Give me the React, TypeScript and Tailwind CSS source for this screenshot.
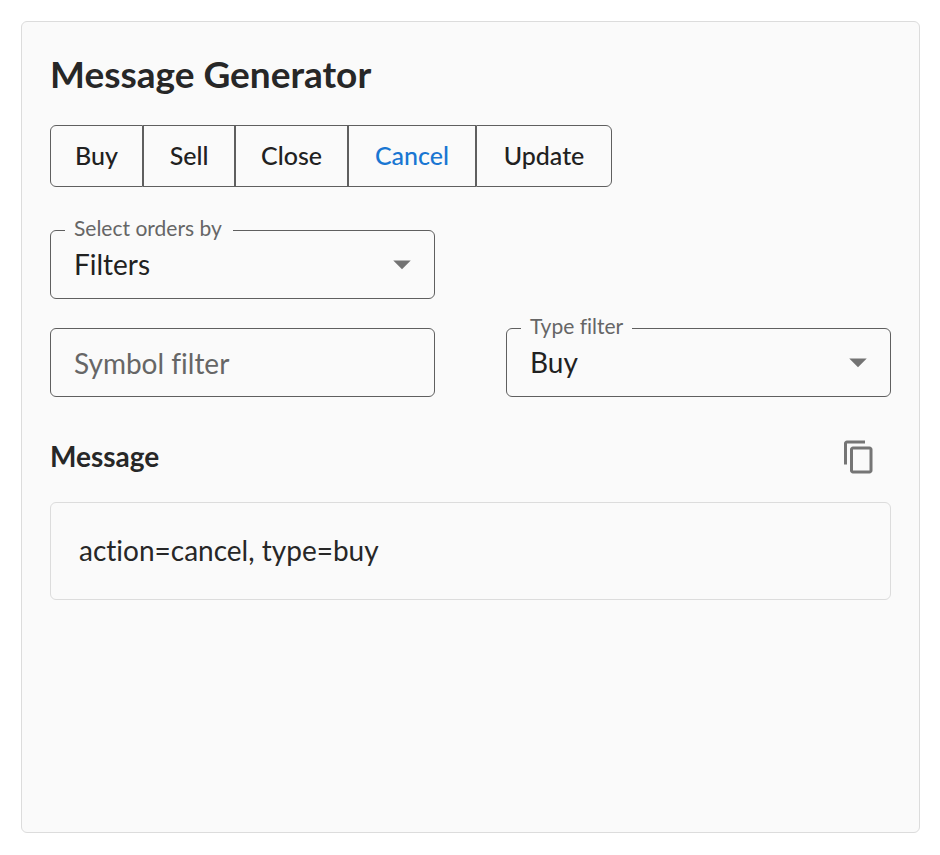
import { useState } from "react";
import type { ReactNode } from "react";

const ACTIONS = [
  { id: "buy", label: "Buy", width: "w-[93px]" },
  { id: "sell", label: "Sell", width: "w-[92px]" },
  { id: "close", label: "Close", width: "w-[113px]" },
  { id: "cancel", label: "Cancel", width: "w-[128px]" },
  { id: "update", label: "Update", width: "w-[136px]" },
] as const;

type SelectFieldProps = {
  id: string;
  label: string;
  labelWidth: string;
  value: string;
  onChange: (value: string) => void;
  children: ReactNode;
};

function SelectField({ id, label, labelWidth, value, onChange, children }: SelectFieldProps) {
  return (
    <div className="relative h-[69px] rounded-md border border-[#5f5f5f]">
      {/* Label sits in the notch of the top border */}
      <label
        htmlFor={id}
        className={`absolute left-3.5 -top-[15px] bg-[#fafafa] pl-[9px] text-[21px] leading-6 whitespace-nowrap text-[#666666] ${labelWidth}`}
      >
        {label}
      </label>
      <select
        id={id}
        value={value}
        onChange={(e) => onChange(e.target.value)}
        className="h-full w-full appearance-none bg-transparent pb-0.5 pl-[23px] pr-14 text-[28px] text-[#212121] outline-none"
      >
        {children}
      </select>
      <svg
        className="pointer-events-none absolute right-[11px] top-3 h-[42px] w-[42px] text-[#737373]"
        viewBox="0 0 24 24"
        fill="currentColor"
      >
        <path d="M7 10l5 5 5-5z" />
      </svg>
    </div>
  );
}

export default function App() {
  const [action, setAction] = useState("cancel");
  const [selectBy, setSelectBy] = useState("filters");
  const [symbol, setSymbol] = useState("");
  const [type, setType] = useState("buy");

  const message = `action=${action}${symbol ? `, symbol=${symbol}` : ""}, type=${type}`;

  return (
    <main className="flex min-h-screen bg-white pt-[21px] pb-[22px] pl-[21px] pr-5 font-['Lato',sans-serif] text-[#272727] [font-variant-ligatures:none]">
      <section className="min-w-0 flex-1 rounded-md border border-[#dcdcdc] bg-[#fafafa] p-7">
        <h1 className="text-[37px] font-bold leading-[48px]">Message Generator</h1>

        {/* Action buttons */}
        <div className="mt-[27px] flex flex-wrap" role="group" aria-label="Action">
          {ACTIONS.map((item) => (
            <button
              key={item.id}
              type="button"
              aria-pressed={action === item.id}
              onClick={() => setAction(item.id)}
              className={`h-[62px] border border-[#5f5f5f] text-[25px] font-medium first:rounded-l-md last:rounded-r-md ${item.width} ${
                action === item.id ? "text-[#1976d2]" : "text-[#212121]"
              }`}
            >
              {item.label}
            </button>
          ))}
        </div>

        {/* Filters */}
        <div className="mt-[43px] grid grid-cols-2 gap-x-[71px] gap-y-[29px]">
          <div className="col-start-1">
            <SelectField
              id="select-by"
              label="Select orders by"
              labelWidth="w-[168px]"
              value={selectBy}
              onChange={setSelectBy}
            >
              <option value="filters">Filters</option>
              <option value="id">Order ID</option>
            </SelectField>
          </div>
          <input
            type="text"
            aria-label="Symbol filter"
            placeholder="Symbol filter"
            value={symbol}
            onChange={(e) => setSymbol(e.target.value)}
            className="col-start-1 h-[69px] w-full rounded-md border border-[#5f5f5f] bg-transparent px-[23px] text-[28px] text-[#212121] outline-none placeholder:text-[#666666]"
          />
          <SelectField
            id="type-filter"
            label="Type filter"
            labelWidth="w-[111px]"
            value={type}
            onChange={setType}
          >
            <option value="buy">Buy</option>
            <option value="sell">Sell</option>
          </SelectField>
        </div>

        {/* Message */}
        <div className="mt-[30px] flex items-center justify-between">
          <h2 className="pb-0.5 text-[28px] font-bold">Message</h2>
          <button
            type="button"
            aria-label="Copy message"
            onClick={() => navigator.clipboard?.writeText(message)}
            className="mr-0.5 rounded-full p-3 text-[#757575]"
          >
            <svg className="h-9 w-9" viewBox="0 0 24 24" fill="currentColor">
              <path d="M16 1H4c-1.1 0-2 .9-2 2v14h2V3h12V1zm3 4H8c-1.1 0-2 .9-2 2v14c0 1.1.9 2 2 2h11c1.1 0 2-.9 2-2V7c0-1.1-.9-2-2-2zm0 16H8V7h11v14z" />
            </svg>
          </button>
        </div>
        <div className="mt-[15px] rounded-md border border-[#dcdcdc] px-7 pt-[27px] pb-[29px] text-[28px] leading-10">
          {message}
        </div>
      </section>
    </main>
  );
}
